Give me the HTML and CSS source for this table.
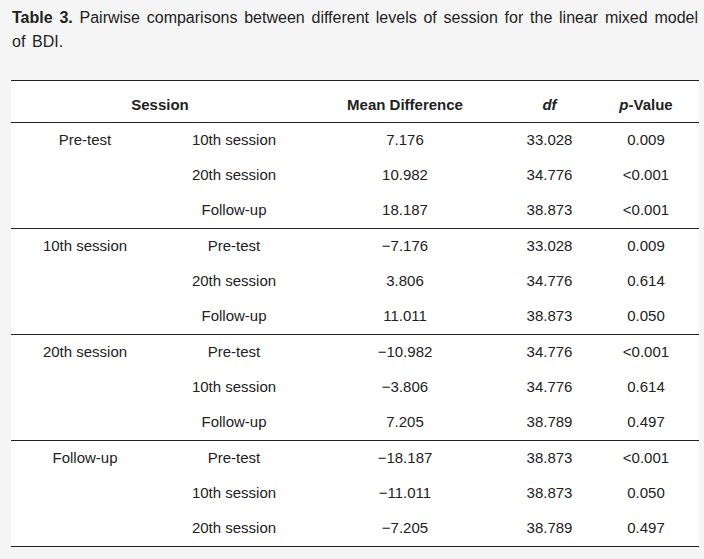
FILE: index.html
```html
<!DOCTYPE html>
<html lang="en">
<head>
<meta charset="utf-8">
<title>Table 3</title>
<link rel="stylesheet" href="styles.css">
</head>
<body>
<div class="page">
  <p class="caption"><b>Table 3.</b> Pairwise comparisons between different levels of session for the linear mixed model of BDI.</p>
  <table class="data">
    <colgroup>
      <col class="c1"><col class="c2"><col class="c3"><col class="c4"><col class="c5">
    </colgroup>
    <thead>
      <tr>
        <th colspan="2">Session</th>
        <th>Mean Difference</th>
        <th><i>df</i></th>
        <th class="last"><i>p</i>-Value</th>
      </tr>
    </thead>
    <tbody>
      <tr><td>Pre-test</td><td>10th session</td><td>7.176</td><td>33.028</td><td class="last">0.009</td></tr>
      <tr><td></td><td>20th session</td><td>10.982</td><td>34.776</td><td class="last">&lt;0.001</td></tr>
      <tr class="end"><td></td><td>Follow-up</td><td>18.187</td><td>38.873</td><td class="last">&lt;0.001</td></tr>

      <tr><td>10th session</td><td>Pre-test</td><td>−7.176</td><td>33.028</td><td class="last">0.009</td></tr>
      <tr><td></td><td>20th session</td><td>3.806</td><td>34.776</td><td class="last">0.614</td></tr>
      <tr class="end"><td></td><td>Follow-up</td><td>11.011</td><td>38.873</td><td class="last">0.050</td></tr>

      <tr><td>20th session</td><td>Pre-test</td><td>−10.982</td><td>34.776</td><td class="last">&lt;0.001</td></tr>
      <tr><td></td><td>10th session</td><td>−3.806</td><td>34.776</td><td class="last">0.614</td></tr>
      <tr class="end"><td></td><td>Follow-up</td><td>7.205</td><td>38.789</td><td class="last">0.497</td></tr>

      <tr><td>Follow-up</td><td>Pre-test</td><td>−18.187</td><td>38.873</td><td class="last">&lt;0.001</td></tr>
      <tr><td></td><td>10th session</td><td>−11.011</td><td>38.873</td><td class="last">0.050</td></tr>
      <tr class="end"><td></td><td>20th session</td><td>−7.205</td><td>38.789</td><td class="last">0.497</td></tr>
    </tbody>
  </table>
</div>
</body>
</html>
```

FILE: styles.css
```css
html, body {
  margin: 0;
  padding: 0;
  background: #f5f5f5;
}

body {
  font-family: "Liberation Sans", Arial, sans-serif;
  color: #222222;
}

.page {
  width: 688px;
  padding: 6px 0 0 11px;
}

.caption {
  width: 686px;
  margin: 0 0 26px 1px;
  font-size: 16px;
  line-height: 24px;
  text-align: justify;
  word-spacing: 2.2px;
}

.data {
  width: 688px;
  table-layout: fixed;
  border-collapse: separate;
  border-spacing: 0;
  background: #ffffff;
  font-size: 15px;
  line-height: 18px;
}

.c1 { width: 148px; }
.c2 { width: 150px; }
.c3 { width: 192px; }
.c4 { width: 97px; }
.c5 { width: 101px; }

.data th {
  font-weight: bold;
  text-align: center;
  padding: 15px 0 8px;
  border-top: 1px solid #222222;
  border-bottom: 1px solid #222222;
}

.data td {
  text-align: center;
  padding: 8px 0 9px;
  white-space: nowrap;
}

.data .last {
  padding-right: 5px;
}

.data tr.end td {
  border-bottom: 1px solid #222222;
}
```
